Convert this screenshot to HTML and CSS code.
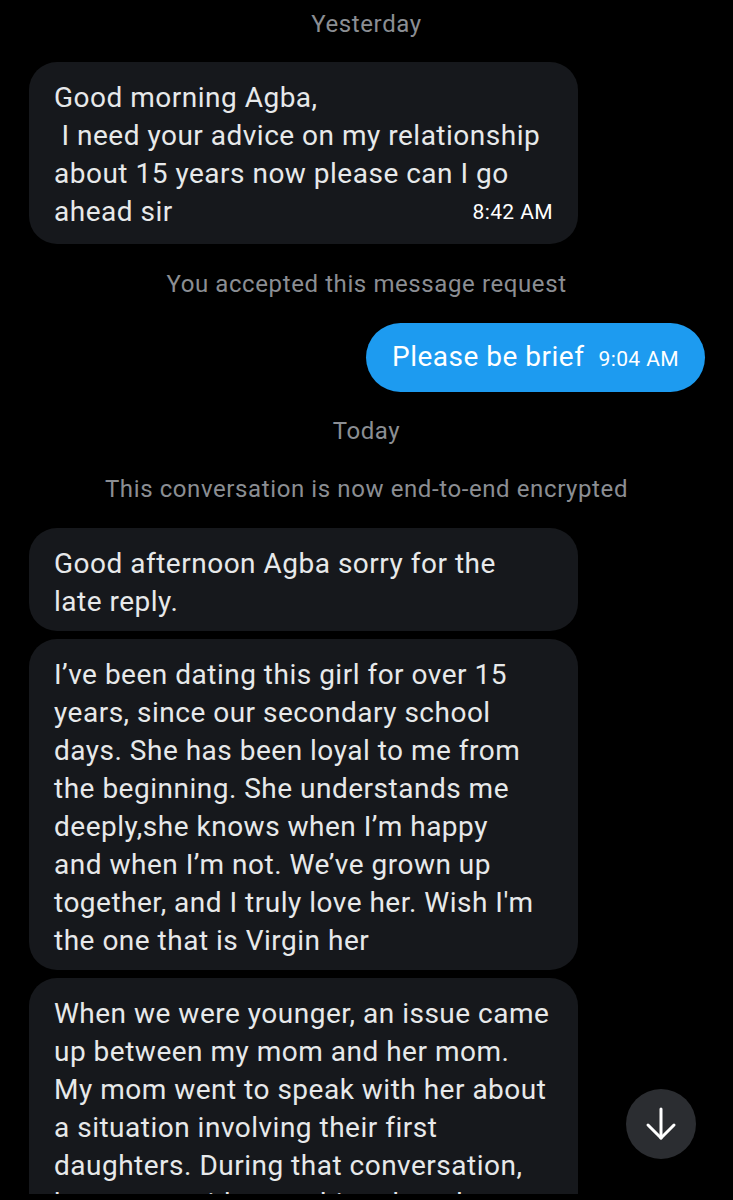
FILE: index.html
```html
<!DOCTYPE html>
<html lang="en">
<head>
  <meta charset="utf-8">
  <title>Messages</title>
  <link rel="stylesheet" href="styles.css">
</head>
<body>
  <div class="thread">
    <div class="divider">Yesterday</div>

    <div class="bubble in first">
      Good morning Agba,<br>
      &nbsp;I need your advice on my relationship<br>
      about 15 years now please can I go
      <div class="last-line"><span>ahead sir</span><span class="time">8:42 AM</span></div>
    </div>

    <div class="note accepted">You accepted this message request</div>

    <div class="out-row">
      <div class="bubble out">Please be brief <span class="time">9:04 AM</span></div>
    </div>

    <div class="divider today">Today</div>
    <div class="note encrypted">This conversation is now end-to-end encrypted</div>

    <div class="bubble in group-start">
      Good afternoon Agba sorry for the<br>
      late reply.
    </div>

    <div class="bubble in">
      I’ve been dating this girl for over 15<br>
      years, since our secondary school<br>
      days. She has been loyal to me from<br>
      the beginning. She understands me<br>
      deeply,she knows when I’m happy<br>
      and when I’m not. We’ve grown up<br>
      together, and I truly love her. Wish I'm<br>
      the one that is Virgin her
    </div>

    <div class="bubble in">
      When we were younger, an issue came<br>
      up between my mom and her mom.<br>
      My mom went to speak with her about<br>
      a situation involving their first<br>
      daughters. During that conversation,<br>
      her mom said something that she didn't like
    </div>
  </div>

  <button class="scroll-down" aria-label="Scroll to bottom">
    <svg width="32" height="34" viewBox="0 0 32 34" fill="none" stroke="#fff" stroke-width="3" stroke-linecap="round" stroke-linejoin="round">
      <path d="M16 2v29"/>
      <path d="M3 18l13 13 13-13"/>
    </svg>
  </button>
</body>
</html>
```

FILE: styles.css
```css
html,body{margin:0;background:#000}
body{font-family:Roboto,"Noto Sans",Arial,sans-serif;color:#e7e9ea;width:733px;height:1200px;position:relative;overflow:hidden}

.thread{height:1194px;overflow:hidden;padding-top:9px;box-sizing:border-box;display:flex;flex-direction:column}

.divider,.note{text-align:center;color:#8b8e93;font-size:24px;letter-spacing:.6px;line-height:30px}
.accepted{margin-top:25px}
.today{margin-top:24px}
.encrypted{margin-top:28px}

.bubble{font-size:28px;letter-spacing:.5px;line-height:38px;border-radius:28px}
.bubble.in{background:#16181c;width:549px;box-sizing:border-box;margin-left:29px;margin-top:8px;padding:17px 25px 10px}
.bubble.first{margin-top:23px;padding-bottom:13px}
.bubble.group-start{margin-top:24px}

.last-line{display:flex;justify-content:space-between;align-items:center}
.time{font-size:21px;letter-spacing:.4px;color:#fff}

.out-row{display:flex;justify-content:flex-end;margin-top:24px;padding-right:28px}
.bubble.out{background:#1d9bf0;color:#fff;border-radius:35px;padding:15px 26px 16px;display:flex;align-items:center;gap:14px}
.bubble.out .time{line-height:24px;padding-top:4px}

.scroll-down{position:absolute;left:626px;top:1089px;width:70px;height:70px;border-radius:50%;border:0;background:#2b2d31;display:flex;align-items:center;justify-content:center;padding:0;cursor:pointer}
```
